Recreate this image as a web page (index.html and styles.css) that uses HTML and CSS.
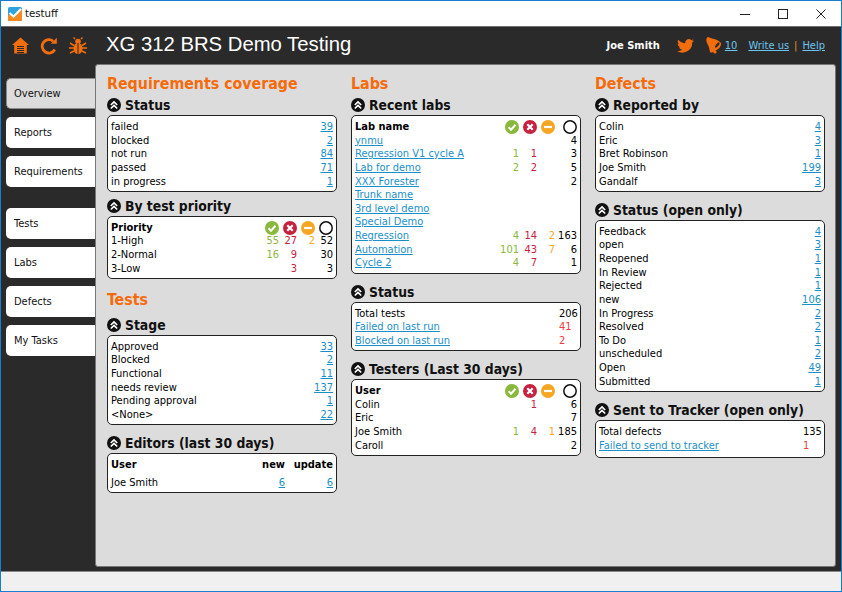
FILE: index.html
```html
<!DOCTYPE html>
<html lang="en">
<head>
<meta charset="utf-8">
<title>testuff</title>
<link rel="stylesheet" href="styles.css">
</head>
<body>
<div class="window">
  <header class="titlebar">
    <div class="appname">
      <svg class="logo" width="14" height="14" viewBox="0 0 14 14"><rect width="14" height="14" rx="1.5" fill="#2fa3e0"/><path d="M0 8.500 L4 7 L6 9 L14 1.500 V12.500 a1.500 1.500 0 0 1 -1.500 1.500 H1.500 a1.500 1.500 0 0 1 -1.500 -1.500 Z" fill="#f58a1f"/><path d="M1.500 6 L5.500 9.500 L13 2" fill="none" stroke="#fff" stroke-width="2.200"/></svg>
      <span>testuff</span>
    </div>
    <div class="winbtns">
      <svg width="10" height="10" viewBox="0 0 10 10"><path d="M0 5.500H10" stroke="#222" fill="none"/></svg>
      <svg width="10" height="10" viewBox="0 0 10 10"><rect x=".5" y=".5" width="9" height="9" stroke="#222" fill="none"/></svg>
      <svg width="10" height="10" viewBox="0 0 10 10"><path d="M.5 .5L9.500 9.500M9.500 .5L.5 9.500" stroke="#222" fill="none"/></svg>
    </div>
  </header>
  <div class="app">
    <div class="topbar">
      <div class="tools">
        <svg width="17" height="17" viewBox="0 0 17 17"><path d="M8.500 .5L17 8H14.800V16.500H2.200V8H0Z" fill="#f26d0d"/><path d="M5 9.500H12M5 11.500H12M5 13.500H12M5 15.500H12" stroke="#2a2a2a" stroke-width="1"/></svg>
        <svg width="18" height="18" viewBox="0 0 18 18"><path d="M14.800 12.500A6.700 6.700 0 1 1 13.200 4.200" fill="none" stroke="#f26d0d" stroke-width="2.800"/><path d="M10.800 6.800H16.800V.8Z" fill="#f26d0d"/></svg>
        <svg width="18" height="18" viewBox="0 0 18 18"><ellipse cx="9" cy="11.500" rx="4.500" ry="5.500" fill="#f26d0d"/><circle cx="9" cy="4.500" r="2.800" fill="#f26d0d"/><path d="M9 6V17" stroke="#2a2a2a"/><path d="M1 6L5 8.500M17 6L13 8.500M0 11H5M18 11H13M1 16L5 14M17 16L13 14M6 2L4.500 .5M12 2L13.500 .5" stroke="#f26d0d" stroke-width="1.500"/></svg>
      </div>
      <div class="project">XG 312 BRS Demo Testing</div>
      <div class="userbar">
        <b class="username">Joe Smith</b>
        <svg class="twitter" width="17" height="14" viewBox="0 0 24 20"><path d="M24 2.400a9.800 9.800 0 0 1-2.800.8A4.900 4.900 0 0 0 23.300.5a9.800 9.800 0 0 1-3.100 1.200A4.900 4.900 0 0 0 11.800 6.100 14 14 0 0 1 1.700 1 4.900 4.900 0 0 0 3.200 7.500 4.900 4.900 0 0 1 1 6.900a4.900 4.900 0 0 0 3.900 4.800 4.900 4.900 0 0 1-2.200.1 4.900 4.900 0 0 0 4.600 3.400A9.900 9.900 0 0 1 0 17.200 14 14 0 0 0 21.500 4.900 10 10 0 0 0 24 2.400Z" fill="#f26d0d"/></svg>
        <svg class="bell" width="17" height="17" viewBox="0 0 17 17"><path d="M2 .5C4 0 5 1 7 1.500C10 2 13 3 16 6C16.500 9 14 12 10 14C8 15.500 6 16 5 15C4.500 12 4 10 3 8C2 6 .5 3 2 .5Z" fill="#f26d0d"/><ellipse cx="12.300" cy="8" rx="1.200" ry="3.300" transform="rotate(38 12.300 8)" fill="#2a2a2a"/><circle cx="10" cy="15" r="1.600" fill="#f26d0d"/></svg>
        <a class="toplink count" href="#">10</a>
        <a class="toplink write" href="#">Write us</a>
        <span class="sep">|</span>
        <a class="toplink" href="#">Help</a>
      </div>
    </div>
    <div class="main">
      <nav class="nav">
        <div class="navgroup">
          <a class="tab active" href="#">Overview</a>
          <a class="tab" href="#">Reports</a>
          <a class="tab" href="#">Requirements</a>
        </div>
        <div class="navgroup">
          <a class="tab" href="#">Tests</a>
          <a class="tab" href="#">Labs</a>
          <a class="tab" href="#">Defects</a>
          <a class="tab" href="#">My Tasks</a>
        </div>
      </nav>
      <main class="panel">
        <section class="col">
          <h1>Requirements coverage</h1>
          <h2><svg class="chev"><use href="#collapse"/></svg>Status</h2>
          <div class="box">
            <div class="row"><span>failed</span><a href="#">39</a></div>
            <div class="row"><span>blocked</span><a href="#">2</a></div>
            <div class="row"><span>not run</span><a href="#">84</a></div>
            <div class="row"><span>passed</span><a href="#">71</a></div>
            <div class="row"><span>in progress</span><a href="#">1</a></div>
          </div>
          <h2 class="next"><svg class="chev"><use href="#collapse"/></svg>By test priority</h2>
          <div class="box">
            <div class="row stat"><b>Priority</b><svg class="si"><use href="#pass"/></svg><svg class="si"><use href="#fail"/></svg><svg class="si"><use href="#block"/></svg><svg class="si"><use href="#none"/></svg></div>
            <div class="row stat"><span>1-High</span><i class="g">55</i><i class="r">27</i><i class="o">2</i><i>52</i></div>
            <div class="row stat"><span>2-Normal</span><i class="g">16</i><i class="r">9</i><i class="o"></i><i>30</i></div>
            <div class="row stat"><span>3-Low</span><i class="g"></i><i class="r">3</i><i class="o"></i><i>3</i></div>
          </div>
          <h1 class="h1next">Tests</h1>
          <h2><svg class="chev"><use href="#collapse"/></svg>Stage</h2>
          <div class="box">
            <div class="row"><span>Approved</span><a href="#">33</a></div>
            <div class="row"><span>Blocked</span><a href="#">2</a></div>
            <div class="row"><span>Functional</span><a href="#">11</a></div>
            <div class="row"><span>needs review</span><a href="#">137</a></div>
            <div class="row"><span>Pending approval</span><a href="#">1</a></div>
            <div class="row"><span>&lt;None&gt;</span><a href="#">22</a></div>
          </div>
          <h2 class="next2"><svg class="chev"><use href="#collapse"/></svg>Editors (last 30 days)</h2>
          <div class="box editors">
            <div class="row ed"><b>User</b><b>new</b><b>update</b></div>
            <div class="row ed"><span>Joe Smith</span><a href="#">6</a><a href="#">6</a></div>
          </div>
        </section>
        <section class="col">
          <h1>Labs</h1>
          <h2><svg class="chev"><use href="#collapse"/></svg>Recent labs</h2>
          <div class="box">
            <div class="row lab"><b>Lab name</b><svg class="si"><use href="#pass"/></svg><svg class="si"><use href="#fail"/></svg><svg class="si"><use href="#block"/></svg><svg class="si"><use href="#none"/></svg></div>
            <div class="row lab"><a href="#">ynmu</a><i class="g"></i><i class="r"></i><i class="o"></i><i>4</i></div>
            <div class="row lab"><a href="#">Regression V1 cycle A</a><i class="g">1</i><i class="r">1</i><i class="o"></i><i>3</i></div>
            <div class="row lab"><a href="#">Lab for demo</a><i class="g">2</i><i class="r">2</i><i class="o"></i><i>5</i></div>
            <div class="row lab"><a href="#">XXX Forester</a><i class="g"></i><i class="r"></i><i class="o"></i><i>2</i></div>
            <div class="row lab"><a href="#">Trunk name</a><i class="g"></i><i class="r"></i><i class="o"></i><i></i></div>
            <div class="row lab"><a href="#">3rd level demo</a><i class="g"></i><i class="r"></i><i class="o"></i><i></i></div>
            <div class="row lab"><a href="#">Special Demo</a><i class="g"></i><i class="r"></i><i class="o"></i><i></i></div>
            <div class="row lab"><a href="#">Regression</a><i class="g">4</i><i class="r">14</i><i class="o">2</i><i>163</i></div>
            <div class="row lab"><a href="#">Automation</a><i class="g">101</i><i class="r">43</i><i class="o">7</i><i>6</i></div>
            <div class="row lab"><a href="#">Cycle 2</a><i class="g">4</i><i class="r">7</i><i class="o"></i><i>1</i></div>
          </div>
          <h2 class="next2"><svg class="chev"><use href="#collapse"/></svg>Status</h2>
          <div class="box">
            <div class="row kv"><span>Total tests</span><span>206</span></div>
            <div class="row kv"><a href="#">Failed on last run</a><i class="alert">41</i></div>
            <div class="row kv"><a href="#">Blocked on last run</a><i class="alert">2</i></div>
          </div>
          <h2 class="next2"><svg class="chev"><use href="#collapse"/></svg>Testers (Last 30 days)</h2>
          <div class="box">
            <div class="row lab"><b>User</b><svg class="si"><use href="#pass"/></svg><svg class="si"><use href="#fail"/></svg><svg class="si"><use href="#block"/></svg><svg class="si"><use href="#none"/></svg></div>
            <div class="row lab"><span>Colin</span><i class="g"></i><i class="r">1</i><i class="o"></i><i>6</i></div>
            <div class="row lab"><span>Eric</span><i class="g"></i><i class="r"></i><i class="o"></i><i>7</i></div>
            <div class="row lab"><span>Joe Smith</span><i class="g">1</i><i class="r">4</i><i class="o">1</i><i>185</i></div>
            <div class="row lab"><span>Caroll</span><i class="g"></i><i class="r"></i><i class="o"></i><i>2</i></div>
          </div>
        </section>
        <section class="col">
          <h1>Defects</h1>
          <h2><svg class="chev"><use href="#collapse"/></svg>Reported by</h2>
          <div class="box">
            <div class="row"><span>Colin</span><a href="#">4</a></div>
            <div class="row"><span>Eric</span><a href="#">3</a></div>
            <div class="row"><span>Bret Robinson</span><a href="#">1</a></div>
            <div class="row"><span>Joe Smith</span><a href="#">199</a></div>
            <div class="row"><span>Gandalf</span><a href="#">3</a></div>
          </div>
          <h2 class="next2"><svg class="chev"><use href="#collapse"/></svg>Status (open only)</h2>
          <div class="box">
            <div class="row"><span>Feedback</span><a href="#">4</a></div>
            <div class="row"><span>open</span><a href="#">3</a></div>
            <div class="row"><span>Reopened</span><a href="#">1</a></div>
            <div class="row"><span>In Review</span><a href="#">1</a></div>
            <div class="row"><span>Rejected</span><a href="#">1</a></div>
            <div class="row"><span>new</span><a href="#">106</a></div>
            <div class="row"><span>In Progress</span><a href="#">2</a></div>
            <div class="row"><span>Resolved</span><a href="#">2</a></div>
            <div class="row"><span>To Do</span><a href="#">1</a></div>
            <div class="row"><span>unscheduled</span><a href="#">2</a></div>
            <div class="row"><span>Open</span><a href="#">49</a></div>
            <div class="row"><span>Submitted</span><a href="#">1</a></div>
          </div>
          <h2 class="next2"><svg class="chev"><use href="#collapse"/></svg>Sent to Tracker (open only)</h2>
          <div class="box tracker">
            <div class="row kv"><span>Total defects</span><span>135</span></div>
            <div class="row kv"><a href="#">Failed to send to tracker</a><i class="alert">1</i></div>
          </div>
        </section>
      </main>
    </div>
  </div>
  <footer class="statusbar"></footer>
</div>
<svg class="defs" width="0" height="0">
  <defs>
    <symbol id="collapse" viewBox="0 0 14 14"><circle cx="7" cy="7" r="7" fill="#111"/><path d="M3.800 7L7 4L10.200 7M3.800 10.500L7 7.500L10.200 10.500" fill="none" stroke="#fff" stroke-width="1.700"/></symbol>
    <symbol id="pass" viewBox="0 0 14 14"><circle cx="7" cy="7" r="7" fill="#8ab83c"/><path d="M3.500 7.200L6 9.700L10.500 4.800" fill="none" stroke="#fff" stroke-width="2"/></symbol>
    <symbol id="fail" viewBox="0 0 14 14"><circle cx="7" cy="7" r="7" fill="#c8203f"/><path d="M4.300 4.300L9.700 9.700M9.700 4.300L4.300 9.700" fill="none" stroke="#fff" stroke-width="2.200"/></symbol>
    <symbol id="block" viewBox="0 0 14 14"><circle cx="7" cy="7" r="7" fill="#f5a623"/><path d="M3 7H11" fill="none" stroke="#fff" stroke-width="2.200"/></symbol>
    <symbol id="none" viewBox="0 0 14 14"><circle cx="7" cy="7" r="6.200" fill="#fff" stroke="#111" stroke-width="1.500"/></symbol>
  </defs>
</svg>
</body>
</html>
```

FILE: styles.css
```css
* { box-sizing: border-box; }
html, body { margin: 0; padding: 0; }
body { width: 842px; height: 592px; overflow: hidden; font-family: "DejaVu Sans Condensed", "DejaVu Sans", sans-serif; font-size: 11px; color: #000; }
.window { width: 842px; height: 592px; display: flex; flex-direction: column; border: 1px solid #1a7ed0; background: #fff; }
.titlebar { height: 25px; display: flex; align-items: center; justify-content: space-between; background: #fff; flex: none; }
.appname { display: flex; align-items: center; gap: 3px; padding-left: 7px; font-size: 11.300px; color: #111; }
.winbtns { display: flex; gap: 28px; padding-right: 15px; }
.winbtns svg { display: block; }
.app { flex: 1; background: #2a2a2a; border-top: 1px solid #6e6e6e; display: flex; flex-direction: column; min-height: 0; }
.topbar { height: 37px; display: flex; align-items: center; flex: none; }
.tools { width: 105px; display: flex; align-items: center; padding-left: 11px; gap: 11px; flex: none; }
.project { font-family: "Liberation Sans", sans-serif; font-size: 20.300px; color: #fff; margin-bottom: 3px; }
.userbar { margin-left: auto; display: flex; align-items: center; padding-right: 16px; color: #fff; font-size: 11px; }
.username { margin-right: 17px; }
.twitter { margin-right: 11px; }
.toplink { color: #6cc5f0; text-decoration: underline; }
.count { margin-left: 3px; margin-right: 11px; }
.sep { color: #f08c2a; margin: 0 5px; }
.main { flex: 1; display: flex; min-height: 0; padding-bottom: 4px; }
.nav { width: 94px; flex: none; padding: 14px 0 0 5px; display: flex; flex-direction: column; gap: 21px; }
.navgroup { display: flex; flex-direction: column; gap: 8px; }
.tab { display: flex; align-items: center; height: 31px; padding-left: 8px; background: #fff; color: #111; text-decoration: none; border-radius: 5px 0 0 5px; }
.tab.active { background: #dcdcdc; border: 1px solid #8a8a8a; border-right: 0; padding-left: 7px; }
.panel { width: 741px; background: #dcdcdc; border-radius: 3px; border: 1px solid #777; display: flex; gap: 14px; padding: 8px 0 0 11px; }
.col { width: 230px; flex: none; display: flex; flex-direction: column; }
h1 { margin: 0; font-size: 15.800px; line-height: 22px; font-weight: 700; color: #f56b0c; }
.h1next { margin-top: 10px; margin-bottom: 4px; }
h2 { margin: 0; display: flex; align-items: center; gap: 4px; font-size: 13.800px; line-height: 20px; height: 20px; font-weight: 700; color: #111; }
.next { margin-top: 4px; }
.next2 { margin-top: 8px; }
.chev { width: 14px; height: 14px; flex: none; }
.box { background: #fff; border: 1px solid #222; border-radius: 5px; padding: 4px 3px 2.500px 3px; }
.editors { padding-top: 1.500px; padding-bottom: 0; }
.tracker { padding-bottom: 5px; }
.row { display: flex; justify-content: space-between; align-items: center; height: 13.650px; line-height: 13.650px; white-space: nowrap; }
.row a { color: #1b8fc9; text-decoration: underline; }
.row i { font-style: normal; }
.g { color: #8ab83c; }
.r { color: #c8203f; }
.o { color: #f5a623; }
.alert { color: #ee3b3b; }
.stat, .lab { display: grid; justify-items: end; }
.stat { grid-template-columns: 1fr 18px 18px 18px 18px; }
.lab { grid-template-columns: 1fr 18px 18px 18px 22px; }
.kv { display: grid; grid-template-columns: 1fr 18px; justify-items: start; }
.stat > :first-child, .lab > :first-child, .ed > :first-child { justify-self: start; }
.si { width: 14px; height: 14px; }
.ed { display: grid; grid-template-columns: 1fr 50px 48px; justify-items: end; height: 18px; line-height: 18px; }
.statusbar { height: 20px; background: #f0f0f0; flex: none; border-top: 1px solid #888; }
.defs { position: absolute; }
```
